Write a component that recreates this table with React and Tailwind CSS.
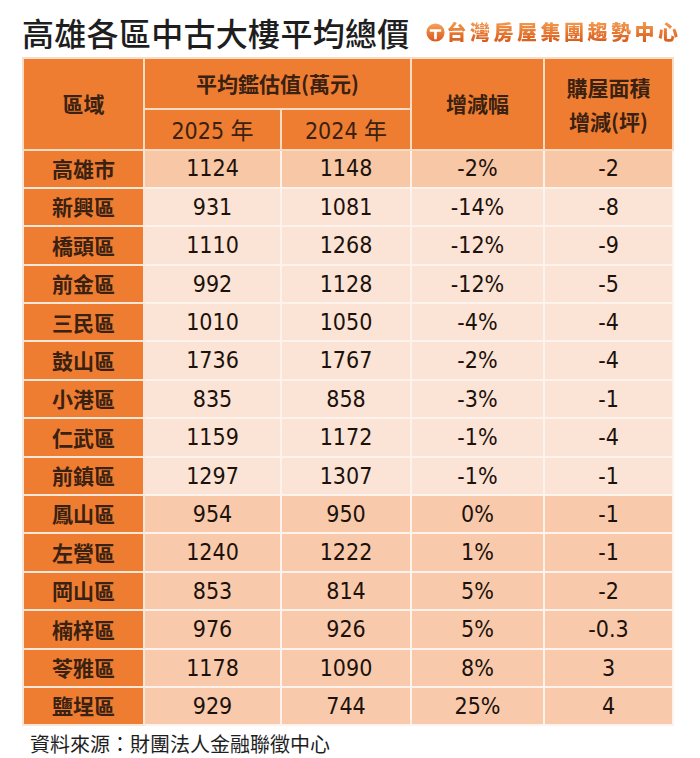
import React from "react";

const ROWS = [
  ["高雄市", "1124", "1148", "-2%", "-2"],
  ["新興區", "931", "1081", "-14%", "-8"],
  ["橋頭區", "1110", "1268", "-12%", "-9"],
  ["前金區", "992", "1128", "-12%", "-5"],
  ["三民區", "1010", "1050", "-4%", "-4"],
  ["鼓山區", "1736", "1767", "-2%", "-4"],
  ["小港區", "835", "858", "-3%", "-1"],
  ["仁武區", "1159", "1172", "-1%", "-4"],
  ["前鎮區", "1297", "1307", "-1%", "-1"],
  ["鳳山區", "954", "950", "0%", "-1"],
  ["左營區", "1240", "1222", "1%", "-1"],
  ["岡山區", "853", "814", "5%", "-2"],
  ["楠梓區", "976", "926", "5%", "-0.3"],
  ["苓雅區", "1178", "1090", "8%", "3"],
  ["鹽埕區", "929", "744", "25%", "4"],
];

const CJK = "font-['Noto_Sans_CJK_TC','Noto_Sans_CJK_SC',sans-serif]";
const NUM = "font-['DejaVu_Sans_Condensed','Liberation_Sans_Narrow','Noto_Sans_CJK_TC',sans-serif]";

function rowBg(i) {
  // first row a touch darker, then light band, then the rising districts darker
  if (i === 0) return "bg-[#f7c7a6]";
  if (i < 9) return "bg-[#fbe4d6]";
  return "bg-[#f8caab]";
}

function Logo() {
  return (
    <div className="flex items-center gap-[2px]">
      <svg width="19" height="19" viewBox="0 0 20 20">
        <defs>
          <linearGradient id="lg" x1="0" y1="0" x2="0" y2="1">
            <stop offset="0" stopColor="#f7a25a" />
            <stop offset="1" stopColor="#d9581c" />
          </linearGradient>
        </defs>
        <circle cx="10" cy="10" r="9.5" fill="url(#lg)" />
        <path d="M4 6.5h12v2.6h-4.6V17H8.6V9.1H4z" fill="#fff" />
      </svg>
      <span
        className={`${CJK} text-[20px] font-black leading-none tracking-[3.5px] bg-gradient-to-b from-[#f39a4d] to-[#d85a1a] bg-clip-text text-transparent`}
      >
        台灣房屋集團趨勢中心
      </span>
    </div>
  );
}

export default function App() {
  const head = "bg-[#ee7d32] border-2 border-[#f9dcc4] text-[#3a2111] font-bold text-[21px]";
  return (
    <div className="w-[700px] h-[758px] overflow-hidden bg-white pl-[22px] pt-[11px]">
      <div className="flex items-center gap-[16px] h-[42px]">
        <h1 className={`${CJK} text-[32px] font-medium text-[#1e1e1e] leading-none tracking-[0.3px]`}>
          高雄各區中古大樓平均總價
        </h1>
        <Logo />
      </div>

      <table className="mt-[4px] w-[650px] border-collapse table-fixed text-center">
        <colgroup>
          <col className="w-[121px]" />
          <col className="w-[137px]" />
          <col className="w-[130px]" />
          <col className="w-[133px]" />
          <col className="w-[129px]" />
        </colgroup>
        <thead>
          <tr className="h-[51px]">
            <th rowSpan={2} className={`${head} ${CJK}`}>區域</th>
            <th colSpan={2} className={`${head} ${CJK}`}>平均鑑估值(萬元)</th>
            <th rowSpan={2} className={`${head} ${CJK}`}>增減幅</th>
            <th rowSpan={2} className={`${head} ${CJK} leading-[34px]`}>
              購屋面積
              <br />
              增減(坪)
            </th>
          </tr>
          <tr className="h-[39px]">
            <th className={`${head} ${NUM} font-normal text-[23px] text-[#2a170b] pt-[4px]`}>2025 年</th>
            <th className={`${head} ${NUM} font-normal text-[23px] text-[#2a170b] pt-[4px]`}>2024 年</th>
          </tr>
        </thead>
        <tbody>
          {ROWS.map((r, i) => (
            <tr key={r[0]} className="h-[38.4px]">
              <td className={`${CJK} bg-[#ee7d32] border-2 border-[#f9e6d8] text-[21px] font-bold text-[#3a2111]`}>
                {r[0]}
              </td>
              {r.slice(1).map((v, j) => (
                <td
                  key={j}
                  className={`${NUM} ${rowBg(i)} border-2 border-[#fdf3ec] text-[23px] text-[#1c110b]`}
                >
                  {v}
                </td>
              ))}
            </tr>
          ))}
        </tbody>
      </table>

      <p className={`${CJK} mt-[7px] pl-[8px] text-[20px] leading-[22px] text-[#1e1e1e]`}>
        資料來源：財團法人金融聯徵中心
      </p>
    </div>
  );
}
